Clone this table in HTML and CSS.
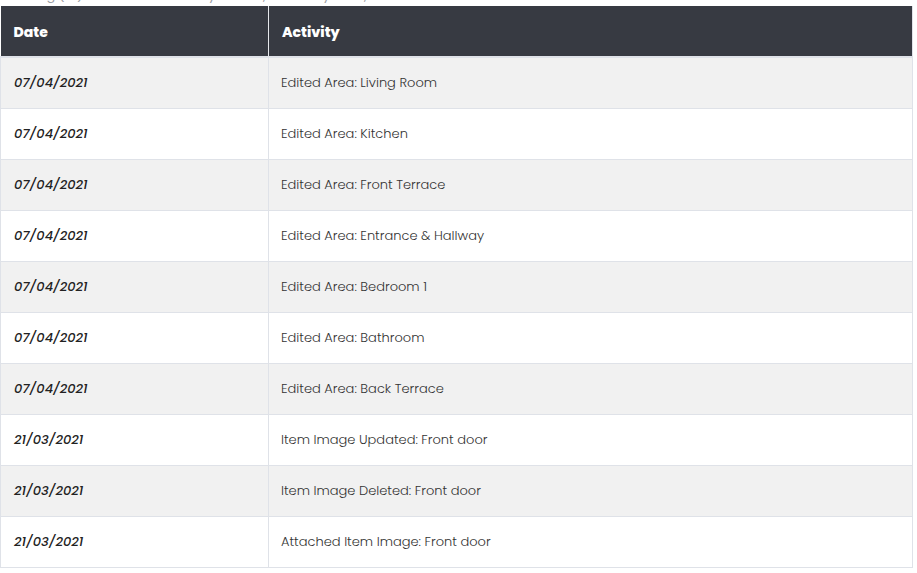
FILE: index.html
```html
<!DOCTYPE html>
<html>
<head>
<meta charset="utf-8">
<link rel="stylesheet" href="styles.css">
</head>
<body>
<p class="caption">Showing (10) most recent activity entries, sorted by date, newest first</p>
<table class="log">
  <thead>
    <tr><th class="col-date">Date</th><th>Activity</th></tr>
  </thead>
  <tbody>
    <tr><td class="date">07/04/2021</td><td>Edited Area: Living Room</td></tr>
    <tr><td class="date">07/04/2021</td><td>Edited Area: Kitchen</td></tr>
    <tr><td class="date">07/04/2021</td><td>Edited Area: Front Terrace</td></tr>
    <tr><td class="date">07/04/2021</td><td>Edited Area: Entrance &amp; Hallway</td></tr>
    <tr><td class="date">07/04/2021</td><td>Edited Area: Bedroom 1</td></tr>
    <tr><td class="date">07/04/2021</td><td>Edited Area: Bathroom</td></tr>
    <tr><td class="date">07/04/2021</td><td>Edited Area: Back Terrace</td></tr>
    <tr><td class="date">21/03/2021</td><td>Item Image Updated: Front door</td></tr>
    <tr><td class="date">21/03/2021</td><td>Item Image Deleted: Front door</td></tr>
    <tr><td class="date">21/03/2021</td><td>Attached Item Image: Front door</td></tr>
  </tbody>
</table>
</body>
</html>
```
FILE: styles.css
```css
html, body {
  margin: 0;
  padding: 0;
  background: #ffffff;
}
body {
  font-family: "Poppins", "Inter", "Open Sans", sans-serif;
  color: #333333;
  overflow: hidden;
}
.caption {
  margin: -12px 0 2px 0;
  height: 16px;
  line-height: 16px;
  font-size: 13px;
  color: #9a9da4;
  white-space: nowrap;
}
.log {
  width: 913px;
  border-collapse: collapse;
  table-layout: fixed;
}
.log th {
  background: #373a42;
  color: #ffffff;
  font-size: 14px;
  font-weight: 800;
  text-align: left;
  height: 51px;
  padding: 2px 0 0 13px;
  border-right: 1px solid #e6e8ec;
  border-bottom: 2px solid #dfe2e8;
  box-sizing: border-box;
}
.log th:last-child {
  border-right: 1px solid #dfe2e8;
}
.log .col-date {
  width: 268px;
}
.log td {
  height: 50px;
  padding: 0 0 0 12px;
  font-size: 13px;
  font-weight: 300;
  color: #333333;
  border: 1px solid #dfe2e8;
  border-top: none;
}
.log td.date {
  padding-left: 13px;
  font-style: italic;
  font-weight: 500;
  color: #222222;
}
.log tbody tr:nth-child(odd) td {
  background: #f1f1f1;
}
.log tbody tr:nth-child(even) td {
  background: #ffffff;
}
```
